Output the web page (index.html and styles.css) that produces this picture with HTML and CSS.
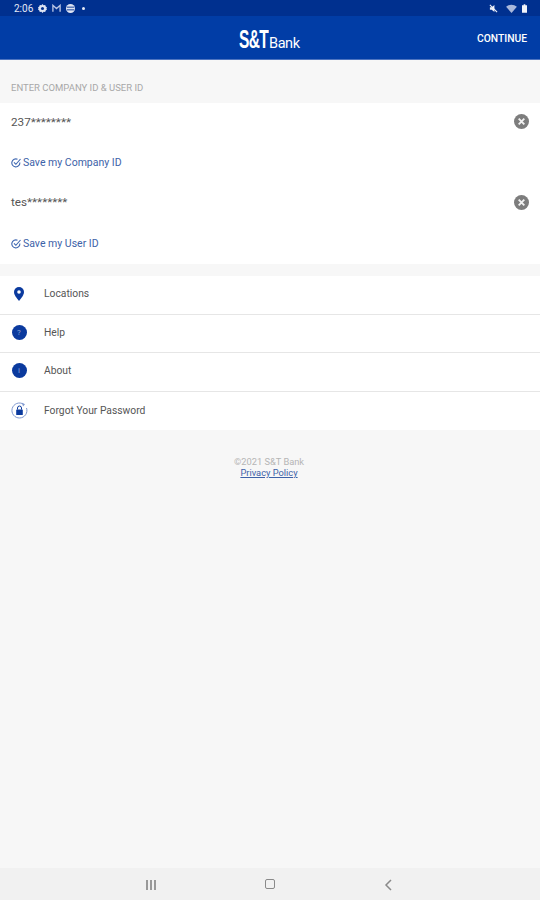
FILE: index.html
```html
<!DOCTYPE html>
<html lang="en">
<head>
    <meta charset="UTF-8">
    <title>S&amp;T Bank</title>
    <link rel="stylesheet" href="styles.css">
</head>
<body>
<div class="screen">
    <div class="status-bar">
        <div class="status-left">
            <span class="status-time">2:06</span>
            <svg class="status-icon" viewBox="0 0 10 10"><path d="M5 0l1.200 1.400 1.800-.3.600 1.800L10 4l-.6 1 .6 1-1.400 1.100-.6 1.800-1.800-.3L5 10 3.800 8.600l-1.800.3-.6-1.800L0 6l.6-1L0 4l1.400-1.100.6-1.800 1.800.3z" fill="#dfe5f3"/><circle cx="5" cy="5" r="1.700" fill="#00308f"/></svg>
            <svg class="status-icon" viewBox="0 0 10 10"><path d="M1 8.500V1.500L5 5l4-3.500v7" fill="none" stroke="#b9c5e4" stroke-width="1.500"/></svg>
            <svg class="status-icon" viewBox="0 0 10 10"><circle cx="5" cy="5" r="5" fill="#dfe5f3"/><path d="M1 3.500h8M1 6.500h8" stroke="#00308f" stroke-width="1"/></svg>
            <span class="status-dot"></span>
        </div>
        <div class="status-right">
            <svg class="status-icon" viewBox="0 0 10 10"><path d="M1 3.500h2L6 1v8L3 6.500H1z" fill="#eef1f8"/><path d="M1 1l8 8" stroke="#eef1f8" stroke-width="1.200"/></svg>
            <svg class="status-wifi" viewBox="0 0 12 10"><path d="M0 3c3.500-3 8.500-3 12 0L6 10z" fill="#a9b8dc"/></svg>
            <svg class="status-batt" viewBox="0 0 6 10"><path d="M2 0h2v1h2v9H0V1h2z" fill="#f2f4fa"/></svg>
        </div>
    </div>

    <header class="app-bar">
        <div class="logo"><span class="logo-mark">S&amp;T</span><span class="logo-name">Bank</span></div>
        <span class="continue">CONTINUE</span>
    </header>

    <main class="content">
        <div class="section-label">ENTER COMPANY ID &amp; USER ID</div>

        <section class="login-card">
            <div class="field-row">
                <span class="field-value">237********</span>
                <svg class="clear-icon" viewBox="0 0 16 16"><circle cx="8" cy="8" r="8" fill="#7d7d7d"/><path d="M5 5l6 6M11 5l-6 6" stroke="#f2f2f2" stroke-width="2"/></svg>
            </div>
            <div class="save-row">
                <svg class="check-icon" viewBox="0 0 10 10"><path d="M8.800 4.500A4 4 0 1 1 6.500 1.300" fill="none" stroke="#3d66b0" stroke-width="1.100"/><path d="M3 4.300L4.900 6.300 9.500 1" fill="none" stroke="#3d66b0" stroke-width="1.100"/></svg>
                <span>Save my Company ID</span>
            </div>
            <div class="field-row">
                <span class="field-value">tes********</span>
                <svg class="clear-icon" viewBox="0 0 16 16"><circle cx="8" cy="8" r="8" fill="#7d7d7d"/><path d="M5 5l6 6M11 5l-6 6" stroke="#f2f2f2" stroke-width="2"/></svg>
            </div>
            <div class="save-row">
                <svg class="check-icon" viewBox="0 0 10 10"><path d="M8.800 4.500A4 4 0 1 1 6.500 1.300" fill="none" stroke="#3d66b0" stroke-width="1.100"/><path d="M3 4.300L4.900 6.300 9.500 1" fill="none" stroke="#3d66b0" stroke-width="1.100"/></svg>
                <span>Save my User ID</span>
            </div>
        </section>

        <nav class="menu">
            <div class="menu-row">
                <span class="menu-icon"><svg width="10" height="14" viewBox="0 0 10 14"><path d="M5 0a5 5 0 0 1 5 5c0 3.500-5 9-5 9S0 8.500 0 5a5 5 0 0 1 5-5z" fill="#0b3a9e"/><circle cx="5" cy="5" r="1.800" fill="#fff"/></svg></span>
                <span>Locations</span>
            </div>
            <div class="menu-row">
                <span class="menu-icon"><span class="round-icon">?</span></span>
                <span>Help</span>
            </div>
            <div class="menu-row">
                <span class="menu-icon"><span class="round-icon">i</span></span>
                <span>About</span>
            </div>
            <div class="menu-row">
                <span class="menu-icon"><svg width="17" height="17" viewBox="0 0 17 17"><path d="M12.500 2.200A7.500 7.500 0 1 0 15.500 6" fill="none" stroke="#7f98cf" stroke-width="1"/><path d="M11 .8l3 1.400-2 2.300z" fill="#7f98cf"/><rect x="5.200" y="7.500" width="6.600" height="5.500" rx=".6" fill="#0b3a9e"/><path d="M6.500 7.500V6a2 2 0 0 1 4 0v1.500" fill="none" stroke="#0b3a9e" stroke-width="1"/></svg></span>
                <span>Forgot Your Password</span>
            </div>
        </nav>

        <footer class="legal">
            <div>©2021 S&amp;T Bank</div>
            <a class="privacy" href="#">Privacy Policy</a>
        </footer>
    </main>

    <div class="nav-bar">
        <span class="nav-recents"><i></i><i></i><i></i></span>
        <span class="nav-home"></span>
        <svg class="nav-back" viewBox="0 0 8 12"><path d="M7 1L2 6l5 5" fill="none" stroke="#8a8a8a" stroke-width="1.500"/></svg>
    </div>
</div>
</body>
</html>
```

FILE: styles.css
```css
* {
    box-sizing: border-box;
}

body {
    margin: 0;
    font-family: Roboto, 'Liberation Sans', sans-serif;
}

.screen {
    width: 540px;
    height: 900px;
    display: flex;
    flex-direction: column;
    background: #f7f7f7;
    overflow: hidden;
}

/* status bar */
.status-bar {
    height: 16px;
    background: #00308f;
    display: flex;
    justify-content: space-between;
    align-items: center;
    padding: 0 13px 0 14px;
    color: #e4e9f5;
}

.status-left,
.status-right {
    display: flex;
    align-items: center;
    gap: 5px;
}

.status-time {
    font-size: 10px;
}

.status-icon {
    width: 9px;
    height: 9px;
}

.status-dot {
    width: 3px;
    height: 3px;
    margin-left: 2px;
    border-radius: 50%;
    background: #e4e9f5;
}

.status-wifi {
    width: 11px;
    height: 9px;
    margin-left: 3px;
}

.status-batt {
    width: 5px;
    height: 9px;
}

/* app bar */
.app-bar {
    height: 44px;
    flex-shrink: 0;
    background: #013da6;
    border-bottom: 1px solid #4d74c0;
    display: flex;
    align-items: center;
    justify-content: center;
    position: relative;
    color: #fff;
}

.logo {
    width: 62px;
    margin-top: 3px;
    display: flex;
    align-items: baseline;
}

/* the wordmark is much narrower than any installed bold */
.logo-mark {
    display: inline-block;
    width: 30px;
    font-family: 'Liberation Sans', sans-serif;
    font-weight: 700;
    font-size: 25px;
    line-height: 26px;
    letter-spacing: -1px;
    white-space: nowrap;
    transform: scaleX(.62);
    transform-origin: left;
}

.logo-name {
    font-size: 14.500px;
    font-weight: 400;
    letter-spacing: -.4px;
}

.continue {
    position: absolute;
    right: 13px;
    top: 16px;
    font-size: 10.300px;
    font-weight: 500;
    line-height: 14px;
}

/* login */
.content {
    flex: 1;
}

.section-label {
    height: 43px;
    padding: 22px 11px 0;
    font-size: 9.500px;
    line-height: 12px;
    color: #a8a8a8;
}

.login-card {
    background: #fff;
}

.field-row {
    height: 40px;
    padding: 0 11px 3px 11px;
    display: flex;
    align-items: center;
    justify-content: space-between;
    font-size: 11.700px;
    color: #555;
}

.field-row:nth-child(3) {
    height: 41px;
}

.clear-icon {
    width: 15px;
    height: 15px;
}

.save-row {
    height: 40px;
    padding: 0 11px 1px;
    display: flex;
    align-items: center;
    gap: 2px;
    font-size: 10.500px;
    color: #3d62a8;
}

.check-icon {
    width: 10px;
    height: 10px;
}

/* menu */
.menu {
    margin-top: 12px;
    background: #fff;
}

.menu-row {
    height: 38.600px;
    padding-bottom: 2px;
    display: flex;
    align-items: center;
    border-bottom: 1px solid #e6e6e6;
    font-size: 10.300px;
    color: #555;
}

.menu-row:last-child {
    border-bottom: none;
}

.menu-icon {
    width: 44px;
    padding-right: 6px;
    display: flex;
    justify-content: center;
}

.round-icon {
    width: 15px;
    height: 15px;
    border-radius: 50%;
    background: #0b3a9e;
    color: #8fa6d8;
    font-size: 8px;
    line-height: 15px;
    text-align: center;
}

/* footer */
.legal {
    margin-top: 27px;
    padding-right: 2px;
    text-align: center;
    font-size: 9.300px;
    line-height: 10.500px;
    color: #b5b5b5;
}

.privacy {
    display: block;
    color: #3d62a8;
}

/* android nav */
.nav-bar {
    height: 32px;
    background: #f1f1f1;
    position: relative;
    display: flex;
    align-items: center;
    justify-content: center;
}

.nav-recents {
    position: absolute;
    left: 146px;
    top: 12px;
    display: flex;
    gap: 2px;
}

.nav-recents i {
    width: 2px;
    height: 10px;
    background: #999;
}

.nav-home {
    width: 10px;
    height: 10px;
    border: 1.500px solid #8a8a8a;
    border-radius: 2px;
}

.nav-back {
    position: absolute;
    left: 384px;
    top: 11px;
    width: 8px;
    height: 12px;
}
```
